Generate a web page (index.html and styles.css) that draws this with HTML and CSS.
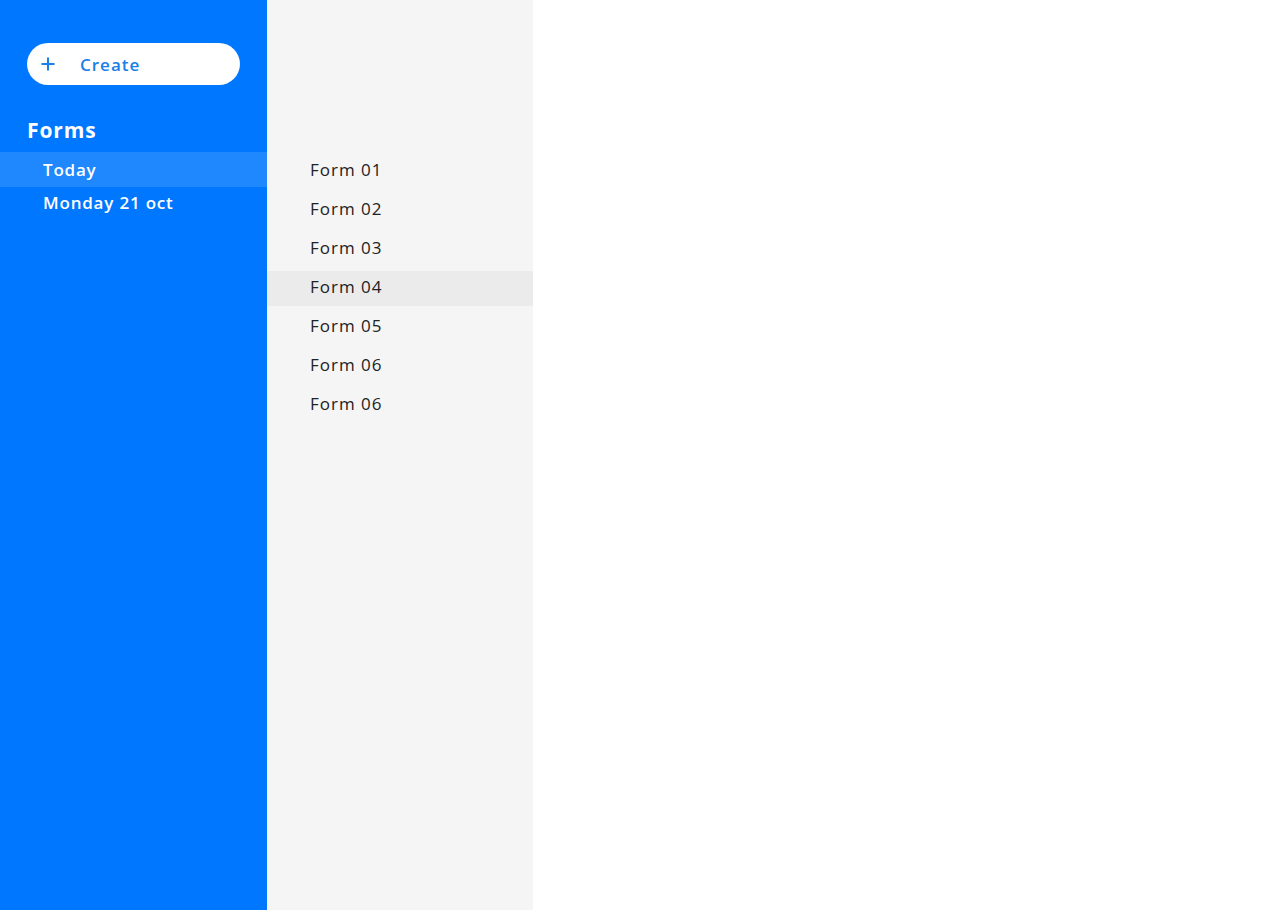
FILE: index.html
```html
<!DOCTYPE html>
<html>
<head>
<meta charset="utf-8">
<link rel="stylesheet" href="styles.css">
</head>
<body>
<div class="app">
  <aside class="sidebar">
    <button class="create">
      <svg class="plus" width="16" height="16" viewBox="0 0 16 16"><path d="M8 1.5v13M1.5 8h13" stroke="currentColor" stroke-width="2" fill="none" stroke-linecap="butt"/></svg>
      <span>Create</span>
    </button>
    <h2 class="section">Forms</h2>
    <ul class="dates">
      <li class="active">Today</li>
      <li>Monday 21 oct</li>
    </ul>
  </aside>
  <section class="list">
    <ul class="forms">
      <li>Form 01</li>
      <li>Form 02</li>
      <li>Form 03</li>
      <li class="active">Form 04</li>
      <li>Form 05</li>
      <li>Form 06</li>
      <li>Form 06</li>
    </ul>
  </section>
  <main class="content"></main>
</div>
</body>
</html>
```
FILE: styles.css
```css
* { box-sizing: border-box; }
html, body { margin: 0; height: 100%; }
body {
  font-family: "Open Sans", "DejaVu Sans", sans-serif;
  background: #fff;
}
.app {
  display: flex;
  height: 910px;
}
.sidebar {
  width: 267px;
  background: #0077ff;
  padding-top: 43px;
  display: flex;
  flex-direction: column;
}
.create {
  margin-left: 27px;
  width: 213px;
  height: 42px;
  border: none;
  border-radius: 21px;
  background: #fff;
  color: #1a7fe8;
  display: flex;
  align-items: center;
  padding: 0 0 0 13px;
  font-family: inherit;
  font-size: 17px;
  font-weight: 600;
  letter-spacing: 1px;
  cursor: pointer;
}
.plus { width: 16px; height: 16px; margin-right: 24px; }
.section {
  margin: 30px 0 0 27px;
  height: 35px;
  line-height: 30px;
  color: #fff;
  font-size: 21px;
  font-weight: 700;
  letter-spacing: 0.9px;
}
.dates {
  list-style: none;
  margin: 2px 0 0;
  padding: 0;
}
.dates li {
  height: 35px;
  line-height: 35px;
  padding-left: 43px;
  color: #fff;
  font-size: 17px;
  font-weight: 600;
  letter-spacing: 0.8px;
}
.dates li + li { height: 31px; line-height: 31px; }
.dates li.active { background: #1f88ff; }
.list {
  width: 266px;
  background: #f5f5f5;
  padding-top: 154px;
}
.forms {
  list-style: none;
  margin: 0;
  padding: 0;
  display: flex;
  flex-direction: column;
  gap: 4px;
}
.forms li {
  height: 35px;
  line-height: 31px;
  padding-left: 43px;
  color: #222;
  font-size: 17px;
  letter-spacing: 1px;
}
.forms li.active { background: #ebebeb; }
.content { flex: 1; background: #fff; }
```
